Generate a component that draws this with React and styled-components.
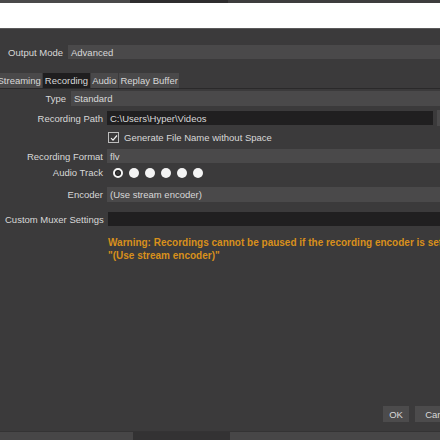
import React from "react";
import styled, { createGlobalStyle } from "styled-components";

const GlobalStyle = createGlobalStyle`
  html, body {
    margin: 0;
    padding: 0;
    background: #3b3a3b;
    overflow: hidden;
  }
  body {
    font-family: "Liberation Sans", Arial, sans-serif;
    font-size: 9.5px;
    color: #d8d8d8;
  }
`;

const Window = styled.div`
  width: 440px;
  height: 440px;
  display: flex;
  flex-direction: column;
  overflow: hidden;
  background: #3b3a3b;
`;

const TopStrip = styled.div`
  height: 3px;
  display: flex;
  flex-shrink: 0;
`;

const StripPart = styled.div`
  width: ${(p) => p.w}px;
  flex: ${(p) => (p.w ? "none" : 1)};
  background: ${(p) => p.color};
`;

const WhiteBar = styled.div`
  height: 25px;
  background: #ffffff;
  border-bottom: 1px solid #5a595a;
  flex-shrink: 0;
`;

const Body = styled.div`
  flex: 1;
  display: flex;
  flex-direction: column;
  padding-top: 16px;
`;

const Row = styled.div`
  display: flex;
  align-items: center;
  height: ${(p) => p.h || 15}px;
  margin-top: ${(p) => p.mt || 0}px;
  flex-shrink: 0;
`;

const Label = styled.div`
  box-sizing: border-box;
  width: ${(p) => p.w}px;
  padding-right: ${(p) => p.pr || 4}px;
  padding-left: ${(p) => (p.left ? 5 : 0)}px;
  text-align: ${(p) => (p.left ? "left" : "right")};
  white-space: nowrap;
  flex-shrink: 0;
`;

const Combo = styled.div`
  flex: 1;
  height: 100%;
  background: #4a494a;
  display: flex;
  align-items: center;
  padding-left: 3px;
  white-space: nowrap;
  margin-right: -10px;
`;

const TextInput = styled.div`
  flex: ${(p) => (p.w ? "none" : 1)};
  width: ${(p) => (p.w ? `${p.w}px` : "auto")};
  height: 100%;
  background: #201f20;
  display: flex;
  align-items: center;
  padding-left: 3px;
  box-sizing: border-box;
  white-space: nowrap;
  margin-right: ${(p) => (p.w ? 0 : -10)}px;
`;

const SideButton = styled.div`
  margin-left: 4px;
  width: 20px;
  height: 16px;
  background: #4a494a;
  flex-shrink: 0;
`;

const TabBar = styled.div`
  display: flex;
  gap: 1px;
  margin-top: 14px;
  margin-left: -4px;
  height: 15px;
  border-bottom: 1px solid #2a292a;
  flex-shrink: 0;
`;

const Tab = styled.div`
  padding: 0 1.5px;
  display: flex;
  align-items: center;
  background: ${(p) => (p.active ? "#1f1e1f" : "#4a494a")};
  white-space: nowrap;
`;

const CheckWrap = styled.div`
  display: flex;
  align-items: center;
  gap: 5px;
  padding-left: 108px;
`;

const CheckBox = styled.div`
  width: 9px;
  height: 9px;
  border: 1px solid #bdbdbd;
  display: flex;
  align-items: center;
  justify-content: center;
`;

const Tracks = styled.div`
  display: flex;
  align-items: center;
  gap: 6px;
  padding-left: 6px;
`;

const Track = styled.div`
  width: 10px;
  height: 10px;
  border-radius: 50%;
  box-sizing: border-box;
  background: ${(p) => (p.active ? "#3b3a3b" : "#f4f4f4")};
  border: ${(p) => (p.active ? "2px solid #f4f4f4" : "none")};
  box-shadow: ${(p) => (p.active ? "inset 0 0 0 1px #151515" : "none")};
`;

const Warning = styled.div`
  margin-top: 10px;
  padding-left: 108px;
  color: #d8901c;
  font-weight: bold;
  font-size: 10px;
  line-height: 13px;
  white-space: nowrap;
`;

const Spacer = styled.div`
  flex: 1;
`;

const Buttons = styled.div`
  display: flex;
  gap: 6px;
  padding-left: 383px;
  height: 16px;
  margin-bottom: 9px;
  flex-shrink: 0;
`;

const Button = styled.div`
  width: ${(p) => p.w}px;
  background: #4c4b4c;
  display: flex;
  align-items: center;
  justify-content: center;
  flex-shrink: 0;
`;

const BottomStrip = styled.div`
  height: 8px;
  display: flex;
  border-top: 1px solid #343334;
  flex-shrink: 0;
`;

function Check() {
  return (
    <svg width="8" height="8" viewBox="0 0 8 8">
      <path d="M1 4.2 L3 6.2 L7 1.5" stroke="#f0f0f0" strokeWidth="1.2" fill="none" />
    </svg>
  );
}

export default function App() {
  return (
    <Window>
      <GlobalStyle />
      <TopStrip>
        <StripPart w={130} color="#4a494a" />
        <StripPart w={98} color="#2e2d2e" />
        <StripPart color="#3e3d3e" />
      </TopStrip>
      <WhiteBar />
      <Body>
        <Row h={14}>
          <Label w={68} pr={5}>Output Mode</Label>
          <Combo>Advanced</Combo>
        </Row>
        <TabBar>
          <Tab>Streaming</Tab>
          <Tab active>Recording</Tab>
          <Tab>Audio</Tab>
          <Tab>Replay Buffer</Tab>
        </TabBar>
        <Row mt={2}>
          <Label w={71} pr={5}>Type</Label>
          <Combo>Standard</Combo>
        </Row>
        <Row h={14} mt={5}>
          <Label w={107}>Recording Path</Label>
          <TextInput w={326}>C:\Users\Hyper\Videos</TextInput>
          <SideButton />
        </Row>
        <Row mt={5}>
          <CheckWrap>
            <CheckBox>
              <Check />
            </CheckBox>
            Generate File Name without Space
          </CheckWrap>
        </Row>
        <Row h={14} mt={4}>
          <Label w={107}>Recording Format</Label>
          <Combo>flv</Combo>
        </Row>
        <Row mt={2}>
          <Label w={107}>Audio Track</Label>
          <Tracks>
            <Track active />
            <Track />
            <Track />
            <Track />
            <Track />
            <Track />
          </Tracks>
        </Row>
        <Row mt={7}>
          <Label w={107}>Encoder</Label>
          <Combo>(Use stream encoder)</Combo>
        </Row>
        <Row h={14} mt={10}>
          <Label w={108} left>
            Custom Muxer Settings
          </Label>
          <TextInput />
        </Row>
        <Warning>
          Warning: Recordings cannot be paused if the recording encoder is set to
          <br />
          "(Use stream encoder)"
        </Warning>
        <Spacer />
        <Buttons>
          <Button w={26}>OK</Button>
          <Button w={50}>Cancel</Button>
        </Buttons>
        <BottomStrip>
          <StripPart w={133} color="#474647" />
          <StripPart w={97} color="#333233" />
          <StripPart color="#474647" />
        </BottomStrip>
      </Body>
    </Window>
  );
}
